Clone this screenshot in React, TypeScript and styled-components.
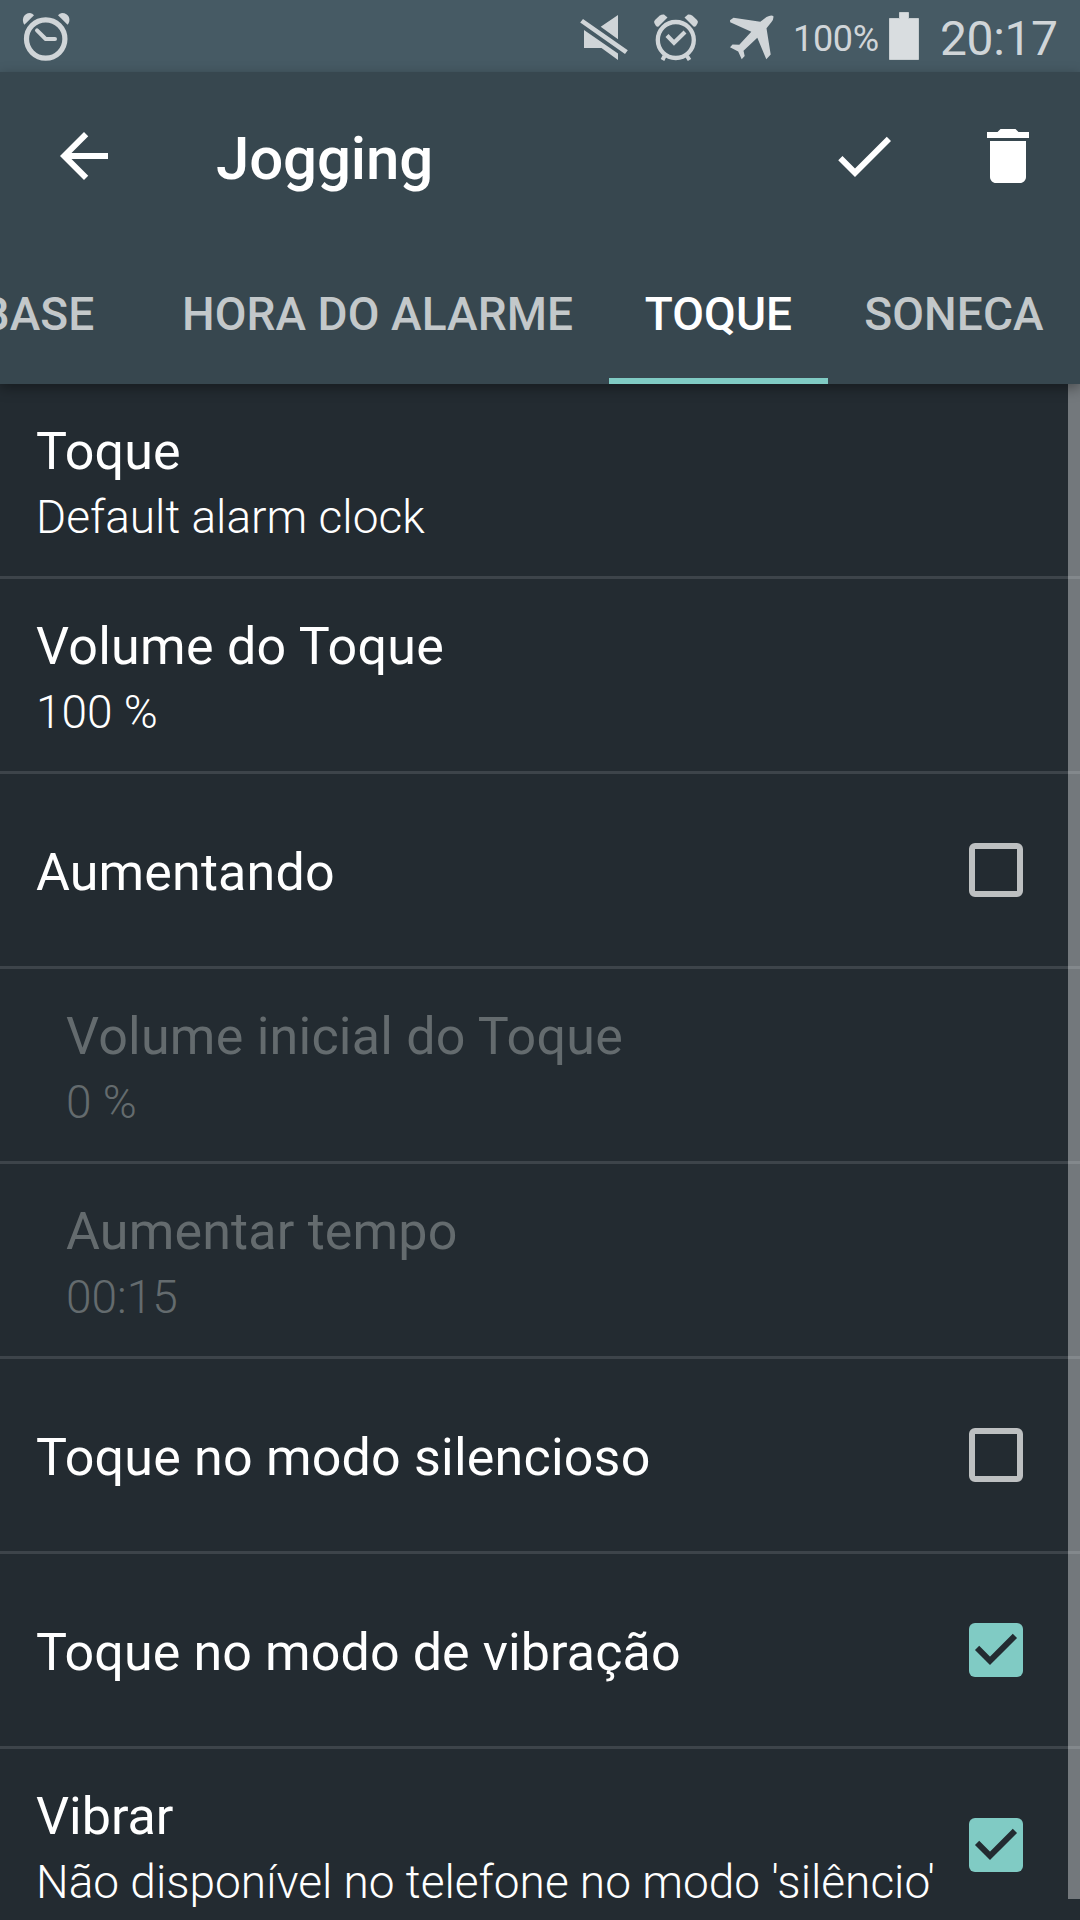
import React from 'react';
import styled, { createGlobalStyle, css } from 'styled-components';

const GlobalStyle = createGlobalStyle`
  html, body { margin: 0; background: #232b31; }
  * { box-sizing: border-box; }
`;

const Screen = styled.div`
  width: 1080px;
  height: 1920px;
  overflow: hidden;
  display: flex;
  flex-direction: column;
  background: #232b31;
  color: #fff;
  font-family: Roboto, sans-serif;
  white-space: nowrap;
`;

const StatusBar = styled.div`
  flex: none;
  height: 72px;
  padding: 0 23px 0 16px;
  display: flex;
  align-items: center;
  background: #465a64;
  color: #d0d5d8;
`;

const StatusIcon = styled.svg<{ $gap?: number }>`
  flex: none;
  display: block;
  width: 60px;
  height: 72px;
  margin-right: ${(p) => p.$gap ?? 0}px;
`;

const StatusSpacer = styled.div`
  flex: 1;
`;

const BatteryLevel = styled.span`
  flex: none;
  width: 95px;
  padding-top: 6px;
  font-size: 36px;
  line-height: 42px;
  letter-spacing: -0.3px;
`;

const Battery = styled.svg`
  flex: none;
  display: block;
  width: 32px;
  height: 72px;
`;

const Clock = styled.span`
  flex: none;
  width: 117px;
  margin-left: 20px;
  padding-top: 5px;
  font-size: 48px;
  line-height: 56px;
  letter-spacing: -0.4px;
`;

const Header = styled.header`
  flex: none;
  position: relative;
  z-index: 1;
  height: 312px;
  background: #37474f;
  box-shadow: 0 4px 12px rgba(0, 0, 0, 0.36);
`;

const Toolbar = styled.div`
  height: 168px;
  padding: 0 36px 0 48px;
  display: flex;
  align-items: center;
`;

const ActionIcon = styled.svg`
  flex: none;
  display: block;
  width: 72px;
  height: 72px;
  fill: #fff;
`;

const Title = styled.h1`
  flex: 1;
  margin: 5px 0 0 96px;
  font-size: 60px;
  line-height: 70px;
  font-weight: 500;
  letter-spacing: -0.15px;
`;

const Actions = styled.div`
  display: flex;
  gap: 72px;
`;

const Tabs = styled.nav`
  display: flex;
  height: 144px;
  overflow: hidden;
`;

const Tab = styled.div<{ $width: number; $active?: boolean; $scrolled?: number }>`
  flex: none;
  width: ${(p) => p.$width}px;
  margin-left: ${(p) => -(p.$scrolled ?? 0)}px;
  padding-top: 4px;
  display: flex;
  align-items: center;
  justify-content: center;
  font-size: 46px;
  font-weight: 500;
  letter-spacing: 0.1px;
  color: ${(p) => (p.$active ? '#fff' : '#c3c8ca')};
  box-shadow: ${(p) => (p.$active ? 'inset 0 -6px #80cbc4' : 'none')};
`;

const List = styled.main`
  flex: 1;
  min-height: 0;
  position: relative;
  overflow: hidden;
`;

const Row = styled.div<{ $indent?: boolean; $disabled?: boolean }>`
  height: 195px;
  padding: 0 48px 0 ${(p) => (p.$indent ? 66 : 36)}px;
  display: flex;
  align-items: center;
  border-bottom: 3px solid #3d444a;
  ${(p) => p.$disabled && css`color: #646b6e;`}
`;

const Labels = styled.div`
  flex: 1;
`;

const Name = styled.div<{ $tracking: number; $single: boolean }>`
  font-size: 52px;
  line-height: 66px;
  padding-top: ${(p) => (p.$single ? 5 : 4)}px;
  letter-spacing: ${(p) => p.$tracking}px;
`;

const Detail = styled.div`
  font-size: 46px;
  line-height: 60px;
  font-weight: 300;
  padding-top: 2.5px;
  margin-bottom: -1.5px;
`;

const CheckIcon = styled.svg`
  flex: none;
  display: block;
  width: 72px;
  height: 72px;
`;

const Scrollbar = styled.div`
  position: absolute;
  top: 0;
  right: 0;
  width: 12px;
  height: 1515px;
  background: rgba(255, 255, 255, 0.365);
`;

const Checkbox = ({ checked }: { checked: boolean }) => (
  <CheckIcon viewBox="0 0 72 72">
    {checked ? (
      <>
        <rect x="9" y="9" width="54" height="54" rx="6" fill="#80cbc4" />
        <path d="M17.1 33.9 L30 46.8 L54.9 21.9" fill="none" stroke="#232b31" strokeWidth="6" />
      </>
    ) : (
      <path
        fillRule="evenodd"
        fill="#bdc0c1"
        d="M15 9h42a6 6 0 0 1 6 6v42a6 6 0 0 1-6 6H15a6 6 0 0 1-6-6V15a6 6 0 0 1 6-6zM15 15v42h42V15z"
      />
    )}
  </CheckIcon>
);

interface Setting {
  name: string;
  tracking: number;
  detail?: string;
  checked?: boolean;
  nested?: boolean;
}

const settings: Setting[] = [
  { name: 'Toque', tracking: 0.15, detail: 'Default alarm clock' },
  { name: 'Volume do Toque', tracking: 0.28, detail: '100 %' },
  { name: 'Aumentando', tracking: 0.15, checked: false },
  { name: 'Volume inicial do Toque', tracking: 0.24, detail: '0 %', nested: true },
  { name: 'Aumentar tempo', tracking: 0.18, detail: '00:15', nested: true },
  { name: 'Toque no modo silencioso', tracking: 0.2, checked: false },
  { name: 'Toque no modo de vibração', tracking: 0.1, checked: true },
  { name: 'Vibrar', tracking: 0, detail: "Não disponível no telefone no modo 'silêncio'", checked: true },
];

export default function App() {
  return (
    <>
      <GlobalStyle />
      <Screen>
        <StatusBar>
          <StatusIcon viewBox="16 0 60 72">
            <g fill="none" stroke="#d0d5d8">
              <circle cx="45.7" cy="39" r="19.2" strokeWidth="5.2" />
              <path d="M37 30.3 L45.7 39 H55" strokeWidth="4" strokeLinecap="round" strokeLinejoin="round" />
            </g>
            <g fill="#d0d5d8">
              <path d="M34 15.2 L24.4 24.8 C21 20 23.5 13 30 13 Q32.5 13.2 34 15.2z" />
              <path d="M58 15.2 L67.6 24.8 C71.5 20 69 13 62 13 Q59.5 13.2 58 15.2z" />
            </g>
          </StatusIcon>
          <StatusSpacer />
          <StatusIcon viewBox="573 0 60 72" $gap={12}>
            <path
              fill="#d0d5d8"
              d="M618 15V39.2L600.7 26.7zM584 30L618 53.4V60L601.5 48H584zM583 19L627.8 50.3L625 54L580.2 22.5z"
            />
          </StatusIcon>
          <StatusIcon viewBox="645 0 60 72" $gap={12}>
            <g fill="none" stroke="#d0d5d8">
              <circle cx="675.8" cy="40" r="18" strokeWidth="4.3" />
              <path d="M667 35.5 L674 42.7 L685 32" strokeWidth="4.2" />
              <path d="M664.5 56 L662.5 60 M687 56 L689.5 60" strokeWidth="4" />
            </g>
            <g fill="#d0d5d8">
              <path d="M667.5 17.5 L658.5 26.5 Q657 27.2 655.7 25.5 L654.3 23 Q653.6 21.6 655 20 L659.5 15.7 Q661.5 14.3 664 14.5z" />
              <path d="M684.5 17.5 L693.5 26.5 Q695 27.2 696.3 25.5 L697.7 23 Q698.4 21.6 697 20 L692.5 15.7 Q690.5 14.3 688 14.5z" />
            </g>
          </StatusIcon>
          <StatusIcon viewBox="717 0 60 72" $gap={16}>
            <path
              fill="#d0d5d8"
              d="M730 20.2L733.5 17.7L760.3 21.8L766.5 17Q771 14.5 773.3 16Q774 19 771.5 22L766.5 28.3L770.7 54.5L766.3 59.3L757.3 37.7L743.5 50.8L744.7 56L741.7 59.3L738.2 51.5L730 47.3L732.5 44.5L739.3 44.7L751.3 31.7L730.2 22.3z"
            />
          </StatusIcon>
          <BatteryLevel>100%</BatteryLevel>
          <Battery viewBox="888 0 32 72">
            <path fill="#d9dde0" stroke="#c8ced1" d="M889.5 18.5H899.5V12.5H908.5V18.5H918.5V59.5H889.5z" />
          </Battery>
          <Clock>20:17</Clock>
        </StatusBar>
        <Header>
          <Toolbar>
            <ActionIcon viewBox="0 0 24 24">
              <path d="M20 11H7.83l5.59-5.59L12 4l-8 8 8 8 1.41-1.41L7.83 13H20v-2z" />
            </ActionIcon>
            <Title>Jogging</Title>
            <Actions>
              <ActionIcon viewBox="0 0 24 24">
                <path d="M9 16.17L4.83 12l-1.42 1.41L9 19 21 7l-1.41-1.41z" />
              </ActionIcon>
              <ActionIcon viewBox="0 0 24 24">
                <path d="M6 19c0 1.1.9 2 2 2h8c1.1 0 2-.9 2-2V7H6v12zM19 4h-3.5l-1-1h-5l-1 1H5v2h14V4z" />
              </ActionIcon>
            </Actions>
          </Toolbar>
          <Tabs>
            <Tab $width={217} $scrolled={71}>BASE</Tab>
            <Tab $width={463}>HORA DO ALARME</Tab>
            <Tab $width={219} $active>TOQUE</Tab>
            <Tab $width={252}>SONECA</Tab>
          </Tabs>
        </Header>
        <List>
          {settings.map((s) => (
            <Row key={s.name} $indent={s.nested} $disabled={s.nested}>
              <Labels>
                <Name $tracking={s.tracking} $single={!s.detail}>{s.name}</Name>
                {s.detail && <Detail>{s.detail}</Detail>}
              </Labels>
              {s.checked !== undefined && <Checkbox checked={s.checked} />}
            </Row>
          ))}
          <Scrollbar />
        </List>
      </Screen>
    </>
  );
}
